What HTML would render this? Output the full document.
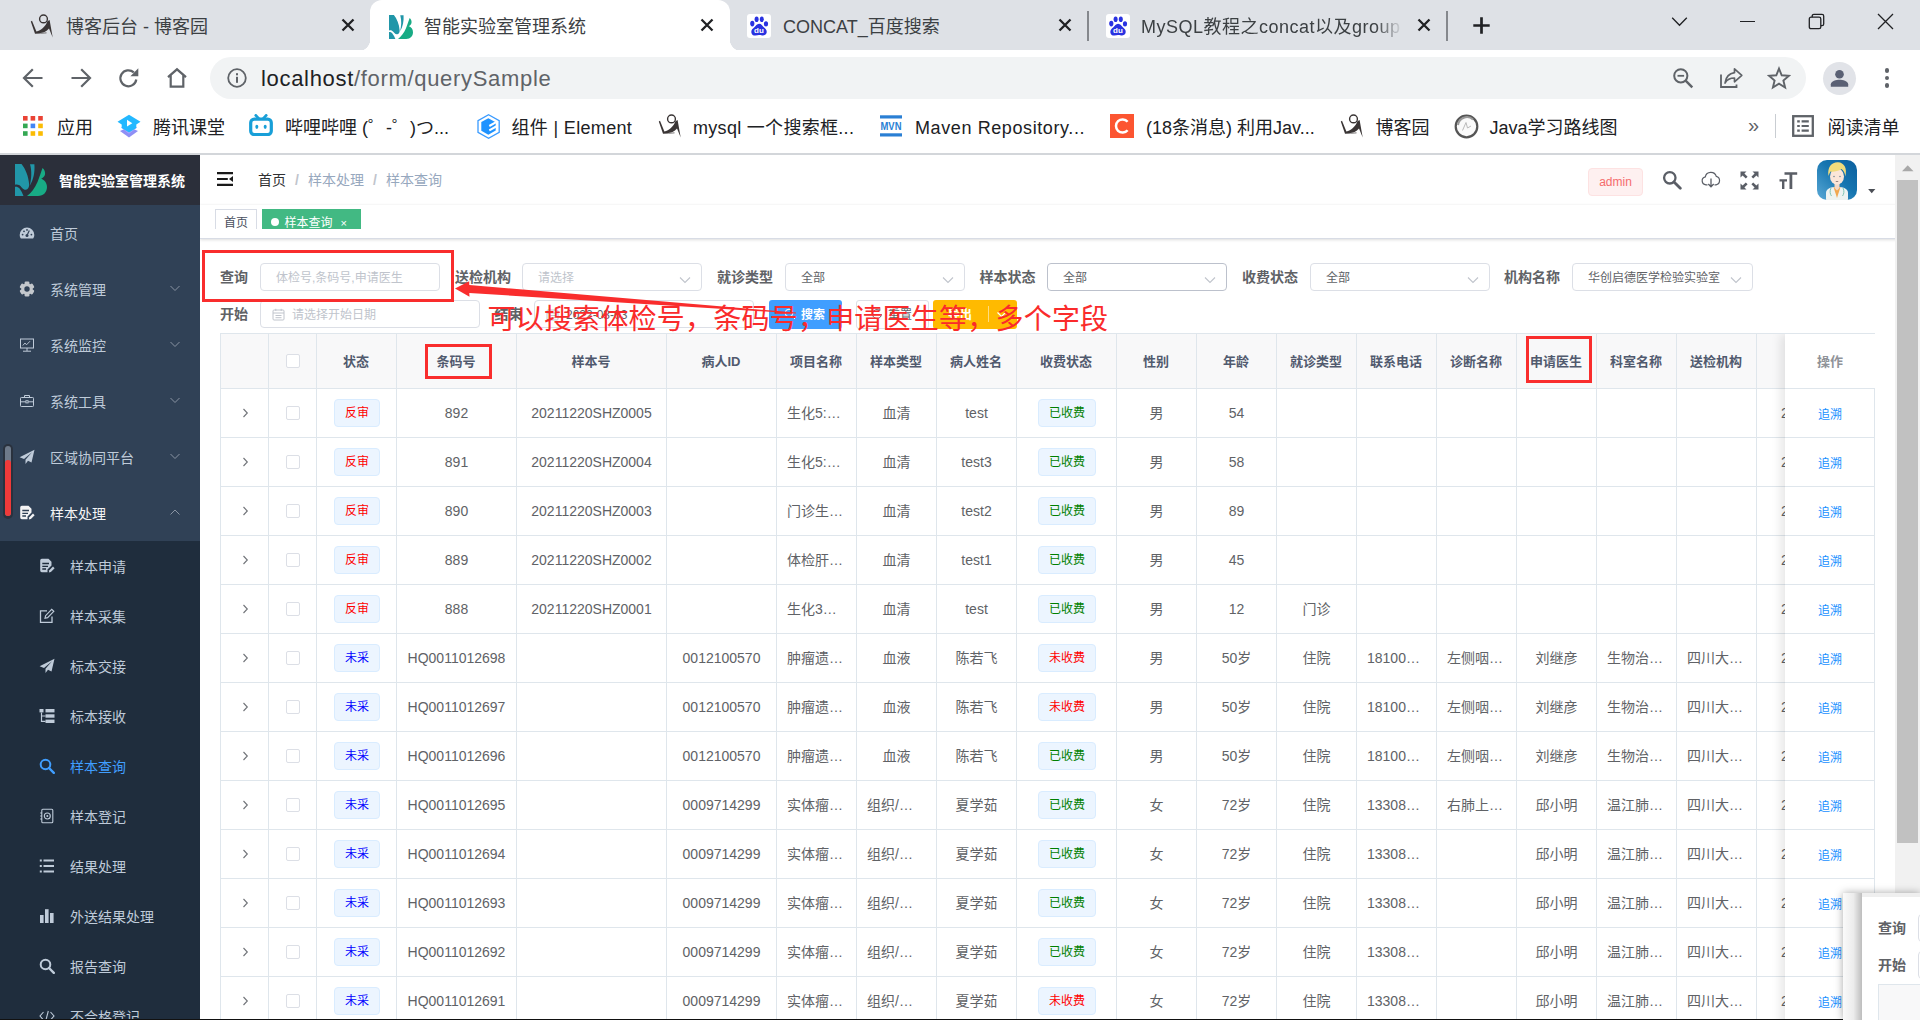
<!DOCTYPE html>
<html lang="zh-CN">
<head>
<meta charset="utf-8">
<title>智能实验室管理系统</title>
<style>
*{box-sizing:border-box;margin:0;padding:0}
html,body{width:1920px;height:1020px;overflow:hidden;background:#fff}
body{position:relative;font-family:"Liberation Sans","Noto Sans CJK SC",sans-serif;color:#606266;font-size:14px}
.abs{position:absolute}
svg{display:block}
/* ---------- browser chrome ---------- */
#tabstrip{position:absolute;left:0;top:0;width:1920px;height:50.500px;background:#dee1e6}
#toolbar{position:absolute;left:0;top:50px;width:1920px;height:53px;background:#fff}
#bmbar{position:absolute;left:0;top:103px;width:1920px;height:49px;background:#fff}
#chromeline{position:absolute;left:0;top:152.500px;width:1920px;height:2.500px;background:#d3d6da;z-index:50}
.tabtxt{position:absolute;top:12px;height:30px;line-height:30px;font-size:18px;color:#3c4043;white-space:nowrap;overflow:hidden}
.tabx{position:absolute;top:17px;width:16px;height:16px}
.tabsep{position:absolute;top:11px;width:1.500px;height:30px;background:#85888d}
#acttab{position:absolute;left:370px;top:0;width:360px;height:50.500px;background:#fff;border-radius:12px 12px 0 0}
#acttab:before,#acttab:after{content:"";position:absolute;bottom:0;width:12px;height:12px}
#acttab:before{left:-12px;background:radial-gradient(circle at 0 0,transparent 12px,#fff 12.5px)}
#acttab:after{right:-12px;background:radial-gradient(circle at 100% 0,transparent 12px,#fff 12.5px)}
#pill{position:absolute;left:210px;top:7px;width:1596px;height:42px;border-radius:21px;background:#f1f3f4}
#url{position:absolute;left:51px;top:0;height:41px;line-height:44px;font-size:22px;letter-spacing:.68px;color:#202124;white-space:nowrap}
#url span{color:#5f6368}
.bm{position:absolute;top:2px;height:47px;line-height:47px;font-size:18px;color:#202124;white-space:nowrap}
.ico{position:absolute}

/* ---------- page ---------- */
#page{position:absolute;left:0;top:154px;width:1920px;height:866px;overflow:hidden;background:#fff}
#side{position:absolute;left:0;top:0;width:200px;height:866px;background:#304156;overflow:hidden}
#sidelogo{position:absolute;left:0;top:0;width:200px;height:51px;background:#2b2f3a}
#sidelogo .t{position:absolute;left:59px;top:0;line-height:54.500px;font-size:14px;font-weight:bold;color:#fff;white-space:nowrap;letter-spacing:0}
.mi{position:absolute;left:0;width:200px;height:56px;line-height:59px;font-size:14px;color:#bfcbd9;white-space:nowrap}
.mi .tx{position:absolute;left:50px;top:0}
.mi svg{position:absolute;left:19px;top:20px}
.mi .chev{left:169px;top:22px}
#submenu{position:absolute;left:0;top:387px;width:200px;height:480px;background:#1f2d3d}
.smi{position:absolute;left:0;width:200px;height:50px;line-height:53px;font-size:14px;color:#bfcbd9;white-space:nowrap}
.smi .tx{position:absolute;left:70px;top:0}
.smi svg{position:absolute;left:39px;top:17px}

#main{position:absolute;left:200px;top:0;width:1697px;height:866px;background:#fff;overflow:hidden}
#navbar{position:absolute;left:0;top:0;width:1697px;height:51px;background:#fff;box-shadow:0 1px 4px rgba(0,21,41,.08)}
.bc{position:absolute;top:0;line-height:53px;font-size:14px;white-space:nowrap}
#tags{position:absolute;left:0;top:51px;width:1697px;height:34px;background:#fff;border-bottom:1px solid #d8dce5;box-shadow:0 1px 3px 0 rgba(0,0,0,.12),0 0 3px 0 rgba(0,0,0,.04)}
#tagclip{position:absolute;left:0;top:0;width:1697px;height:24px;overflow:hidden}
.tag{position:absolute;top:4px;height:26px;line-height:26px;border:1px solid #d8dce5;color:#495060;background:#fff;font-size:12px;white-space:nowrap}
.lab{position:absolute;height:28px;line-height:29px;font-size:14px;font-weight:bold;color:#606266;white-space:nowrap}
.inp{position:absolute;height:28px;border:1px solid #dcdfe6;border-radius:4px;background:#fff;font-size:12px;line-height:29px;color:#606266;white-space:nowrap;overflow:hidden}
.inp .ph{color:#c0c4cc}
.inp .arr{position:absolute;right:10.500px;top:9.500px}
.btn{position:absolute;top:146px;height:28.500px;border-radius:3px;font-size:12px;line-height:30px;color:#fff;white-space:nowrap}

#tbl{position:absolute;left:20px;top:179px;width:1655px;height:700px;border-top:1px solid #dfe6ec;border-left:1px solid #dfe6ec;overflow:hidden;color:#606266}
#tbl .hd{position:absolute;left:0;top:0;width:1653px;height:55px;background:#f8f8f9;border-bottom:1px solid #dfe6ec}
#tbl .vl{position:absolute;top:0;width:1px;height:700px;background:#dfe6ec}
#tbl .hl{position:absolute;left:0;width:1653px;height:1px;background:#dfe6ec}
.th{position:absolute;top:0;height:54px;line-height:55px;text-align:center;font-size:13px;font-weight:bold;color:#515a6e;white-space:nowrap}
.td{position:absolute;height:48px;line-height:48px;text-align:center;font-size:14px;white-space:nowrap;overflow:hidden}
.td.l{text-align:left;padding-left:10px}
.cb{position:absolute;left:65px;width:14px;height:14px;border:1px solid #dcdfe6;border-radius:2px;background:#fff}
.tg{position:absolute;height:28px;line-height:27px;border:1px solid #d9ecff;border-radius:4px;background:#ecf5ff;font-size:12px;text-align:center;white-space:nowrap}
#fix{position:absolute;left:1564px;top:0;width:90px;height:700px;background:#fff;box-shadow:-4px 0 10px rgba(0,0,0,.1);border-right:1px solid #dfe6ec}
#fix .hd2{position:absolute;left:0;top:0;width:90px;height:55px;background:#fff;border-bottom:1px solid #dfe6ec;line-height:55px;text-align:center;font-size:13px;font-weight:bold;color:#909399}
#fix .lk{position:absolute;left:0;width:90px;height:48px;line-height:53px;text-align:center;font-size:12px;color:#1890ff}
#fix .hl2{position:absolute;left:0;width:90px;height:1px;background:#dfe6ec}
</style>
</head>
<body>
<!-- ================= BROWSER CHROME ================= -->
<div id="tabstrip">
  <div id="acttab"></div>
  <svg class="ico" style="left:30px;top:14px" width="24" height="24" viewBox="0 0 24 24"><circle cx="13.500" cy="4.900" r="3.900" fill="none" stroke="#3a3535" stroke-width="1.400"/><path d="M0.800 7.400 L2 6.800 L6.400 17.400 C11 16.500 15.500 12.500 17.400 7.200 L19.600 6 L22.700 23.500 L19 14.500 C16.500 17.500 13 19 9 19.200 L16.500 18.600 L16.500 19.300 L5 19.800 Z" fill="#3a3535"/></svg><div class="tabtxt" style="left:66px;width:270px">博客后台 - 博客园</div><svg class="tabx" style="left:340px" viewBox="0 0 16 16"><path d="M2.500 2.500 L13.500 13.500 M13.500 2.500 L2.500 13.500" stroke="#202124" stroke-width="2.300" fill="none"/></svg><svg class="ico" style="left:389px;top:14.5px" width="24" height="24" viewBox="0 0 32 32"><path d="M0 0 H6.500 C10.500 5 13.500 12 14.200 20.500 C14.300 23 13 25.500 10.800 25.800 C8 26 6.500 22.500 4 21 C2.500 20.200 1 20.300 0 20.800 Z" fill="#2196a8"/><path d="M15 0.300 H19.400 C20 8 18.500 16 14.800 21.500 C16.500 15 17 7 15 0.300 Z" fill="#2196a8"/><path d="M0 22.800 C1.500 22.400 3 22.800 4.500 24.500 C6.500 27 7.500 29.500 8.500 32 H0 Z" fill="#2196a8"/><path d="M27.500 4 C29.500 5.500 30.500 8 30 10.500 C29.500 12.500 28 14 26.200 14.800 C29.500 16 32 19 32 23 C32 28 28.500 32 23 32 H12 C16 29 20 24 22.500 18 C24.500 13 26 8 27.500 4 Z" fill="#18ab85"/></svg><div class="tabtxt" style="left:424px;width:270px">智能实验室管理系统</div><svg class="tabx" style="left:699px" viewBox="0 0 16 16"><path d="M2.500 2.500 L13.500 13.500 M13.500 2.500 L2.500 13.500" stroke="#202124" stroke-width="2.300" fill="none"/></svg><svg class="ico" style="left:747px;top:14px" width="24" height="24" viewBox="0 0 24 24"><rect width="24" height="24" rx="3" fill="#fff"/><g fill="#2932e1"><ellipse cx="5.3" cy="9.6" rx="2.1" ry="2.8"/><ellipse cx="9.6" cy="5.2" rx="2" ry="2.8"/><ellipse cx="14.8" cy="5.3" rx="2" ry="2.8"/><ellipse cx="19" cy="9.9" rx="2.1" ry="2.7"/><path d="M12.1 9.8c2.4 0 3.3 2.3 5 3.8 1.9 1.6 3 2.7 2.5 5.2-.5 2.3-2.700 2.800-4.4 2.600-1.400-.2-2.200-.4-3.200-.4s-2.100.3-3.500.5c-1.800.2-3.700-.6-4.100-2.800-.4-2.500 1-3.700 2.700-5.100 1.800-1.500 2.600-3.800 5-3.800z"/></g><text x="12" y="19.300" font-family="Liberation Sans,sans-serif" font-size="8" font-weight="bold" fill="#fff" text-anchor="middle">du</text></svg><div class="tabtxt" style="left:783px;width:270px">CONCAT_百度搜索</div><svg class="tabx" style="left:1057px" viewBox="0 0 16 16"><path d="M2.500 2.500 L13.500 13.500 M13.500 2.500 L2.500 13.500" stroke="#202124" stroke-width="2.300" fill="none"/></svg><div class="tabsep" style="left:1087px"></div><svg class="ico" style="left:1106px;top:14px" width="24" height="24" viewBox="0 0 24 24"><rect width="24" height="24" rx="3" fill="#fff"/><g fill="#2932e1"><ellipse cx="5.3" cy="9.6" rx="2.1" ry="2.8"/><ellipse cx="9.6" cy="5.2" rx="2" ry="2.8"/><ellipse cx="14.8" cy="5.3" rx="2" ry="2.8"/><ellipse cx="19" cy="9.9" rx="2.1" ry="2.7"/><path d="M12.1 9.8c2.4 0 3.3 2.3 5 3.8 1.9 1.6 3 2.7 2.5 5.2-.5 2.3-2.700 2.800-4.4 2.600-1.400-.2-2.200-.4-3.200-.4s-2.100.3-3.500.5c-1.800.2-3.700-.6-4.100-2.800-.4-2.500 1-3.700 2.700-5.100 1.800-1.500 2.600-3.800 5-3.800z"/></g><text x="12" y="19.300" font-family="Liberation Sans,sans-serif" font-size="8" font-weight="bold" fill="#fff" text-anchor="middle">du</text></svg><div class="tabtxt" style="left:1141px;width:262px;-webkit-mask-image:linear-gradient(90deg,#000 235px,transparent 262px);mask-image:linear-gradient(90deg,#000 235px,transparent 262px);letter-spacing:.5px">MySQL教程之concat以及group</div><svg class="tabx" style="left:1416px" viewBox="0 0 16 16"><path d="M2.500 2.500 L13.500 13.500 M13.500 2.500 L2.500 13.500" stroke="#202124" stroke-width="2.300" fill="none"/></svg><div class="tabsep" style="left:1446px"></div><svg class="ico" style="left:1472.500px;top:17px" width="17" height="17" viewBox="0 0 17 17"><path d="M8.500 0.300V16.700M0.300 8.500H16.700" stroke="#202124" stroke-width="2.700"/></svg><svg class="ico" style="left:1670px;top:12px" width="20" height="20" viewBox="0 0 20 20"><path d="M2.200 5.700 L9.500 13.300 L16.800 5.700" stroke="#202124" stroke-width="1.300" fill="none"/></svg><div class="abs" style="left:1740px;top:20.800px;width:15px;height:1.200px;background:#202124"></div><svg class="ico" style="left:1808px;top:13px" width="17" height="17" viewBox="0 0 17 17"><path d="M4.200 4.200 V3 a1.700 1.700 0 0 1 1.700 -1.700 H14 a1.700 1.700 0 0 1 1.700 1.700 V11 a1.700 1.700 0 0 1 -1.700 1.700 H12.800" stroke="#202124" stroke-width="1.300" fill="none"/><rect x="1.300" y="4.200" width="11.500" height="11.500" rx="1.700" stroke="#202124" stroke-width="1.300" fill="none"/></svg><svg class="ico" style="left:1877px;top:13px" width="17" height="17" viewBox="0 0 17 17"><path d="M1 1 L16 16 M16 1 L1 16" stroke="#202124" stroke-width="1.300" fill="none"/></svg>
</div>
<div id="toolbar">
  <div id="pill"><div id="url">localhost<span>/form/querySample</span></div></div>
  <svg class="ico" style="left:22px;top:17px" width="22" height="22" viewBox="0 0 22 22"><path d="M20.500 11H3M10.800 2.200 L2 11 L10.800 19.800" stroke="#5f6368" stroke-width="2.200" fill="none"/></svg><svg class="ico" style="left:70px;top:17px" width="22" height="22" viewBox="0 0 22 22"><path d="M1.500 11H19M11.200 2.200 L20 11 L11.200 19.800" stroke="#5f6368" stroke-width="2.200" fill="none"/></svg><svg class="ico" style="left:118px;top:17px" width="22" height="22" viewBox="0 0 22 22"><path d="M18.300 12.500 A8 8 0 1 1 15.800 5.400" stroke="#5f6368" stroke-width="2.200" fill="none"/><path d="M20.300 1.300 V9.200 H12.400 Z" fill="#5f6368"/></svg><svg class="ico" style="left:166px;top:17px" width="22" height="22" viewBox="0 0 22 22"><path d="M2 10.200 L11 2.300 L20 10.200 M4.700 8.600 V19.600 H17.300 V8.600" stroke="#5f6368" stroke-width="2.200" fill="none" stroke-linejoin="miter"/></svg><svg class="ico" style="left:226px;top:17px" width="22" height="22" viewBox="0 0 22 22"><circle cx="11" cy="11" r="8.800" stroke="#5f6368" stroke-width="1.800" fill="none"/><rect x="10" y="9.800" width="2" height="6" fill="#5f6368"/><rect x="10" y="6.200" width="2" height="2.100" fill="#5f6368"/></svg><svg class="ico" style="left:1672px;top:17px" width="22" height="22" viewBox="0 0 22 22"><circle cx="8.800" cy="8.800" r="6.600" stroke="#5f6368" stroke-width="2" fill="none"/><path d="M13.600 13.600 L20.300 20.300" stroke="#5f6368" stroke-width="2.400"/><path d="M5.500 8.800H12.100" stroke="#5f6368" stroke-width="1.800"/></svg><svg class="ico" style="left:1719px;top:16px" width="25" height="24" viewBox="0 0 25 24"><path d="M2 8.500 V21 H17.500 V18.500" stroke="#5f6368" stroke-width="1.800" fill="none"/><path d="M15.500 2.800 L22.800 9.300 L15.500 15.800 V12 C11 12 8 13.500 6 17 C6.800 11.500 9.800 7.500 15.500 6.700 Z" stroke="#5f6368" stroke-width="1.700" fill="none" stroke-linejoin="round"/></svg><svg class="ico" style="left:1767px;top:16px" width="24" height="24" viewBox="0 0 24 24"><path d="M12 2.600 L14.700 9.300 L21.900 9.800 L16.400 14.500 L18.100 21.500 L12 17.700 L5.900 21.500 L7.600 14.500 L2.100 9.800 L9.300 9.300 Z" stroke="#5f6368" stroke-width="1.900" fill="none" stroke-linejoin="miter"/></svg><div class="abs" style="left:1823px;top:12px;width:33px;height:33px;border-radius:50%;background:#e1e3e8"></div><svg class="ico" style="left:1829px;top:18px" width="21" height="21" viewBox="0 0 21 21"><circle cx="10.500" cy="6.300" r="4.300" fill="#5a6074"/><path d="M1.800 18.800 V16.300 C1.800 13 7.500 11.700 10.500 11.700 S19.200 13 19.200 16.300 V18.800 Z" fill="#5a6074"/></svg><div class="abs" style="left:1884.800px;top:18.4px;width:4.400px;height:4.400px;border-radius:50%;background:#5f6368"></div><div class="abs" style="left:1884.800px;top:25.9px;width:4.400px;height:4.400px;border-radius:50%;background:#5f6368"></div><div class="abs" style="left:1884.800px;top:33.4px;width:4.400px;height:4.400px;border-radius:50%;background:#5f6368"></div>
</div>
<div id="bmbar">
  <svg class="ico" style="left:23px;top:12.500px" width="20" height="20" viewBox="0 0 20 20"><rect x="0.0" y="0.0" width="4.600" height="4.600" fill="#ea4335"/><rect x="7.6" y="0.0" width="4.600" height="4.600" fill="#ea4335"/><rect x="15.2" y="0.0" width="4.600" height="4.600" fill="#ea4335"/><rect x="0.0" y="7.6" width="4.600" height="4.600" fill="#34a853"/><rect x="7.6" y="7.6" width="4.600" height="4.600" fill="#4285f4"/><rect x="15.2" y="7.6" width="4.600" height="4.600" fill="#fbbc04"/><rect x="0.0" y="15.2" width="4.600" height="4.600" fill="#34a853"/><rect x="7.6" y="15.2" width="4.600" height="4.600" fill="#fbbc04"/><rect x="15.2" y="15.2" width="4.600" height="4.600" fill="#fbbc04"/></svg><div class="bm" style="left:57px">应用</div><svg class="ico" style="left:117px;top:10.500px" width="24" height="24" viewBox="0 0 24 24"><path d="M12 13 L21 17 L12 23.500 L3 17 Z" fill="#8f8ff5"/><path d="M12 9 L20 13.500 L12 19.800 L4 13.500 Z" fill="#b0a6ff"/><path d="M12 0.800 L23.500 7.800 L19.300 10.500 V14 L12 18.500 L4.700 14 V10.500 L0.500 7.800 Z" fill="#23b8ff"/><path d="M10 5.800 L15.300 9.200 L10 12.600 Z" fill="#fff"/></svg><div class="bm" style="left:153px">腾讯课堂</div><svg class="ico" style="left:249px;top:11px" width="24" height="22" viewBox="0 0 24 22"><path d="M6.800 1.400 L9.800 4.600 M17.200 1.400 L14.200 4.600" stroke="#189fd8" stroke-width="2.800" stroke-linecap="round"/><rect x="1.700" y="5.200" width="20.600" height="15.400" rx="3.600" fill="none" stroke="#189fd8" stroke-width="3.200"/><ellipse cx="7.800" cy="12.800" rx="1.500" ry="2.100" fill="#189fd8"/><ellipse cx="16.200" cy="12.800" rx="1.500" ry="2.100" fill="#189fd8"/></svg><div class="bm" style="left:285px">哔哩哔哩 (゜-゜)つ...</div><svg class="ico" style="left:476.500px;top:10.500px" width="23" height="25" viewBox="0 0 23 25"><path d="M11.600 0.800 L22.200 6.700 V18.300 L11.600 24.200 L1 18.300 V6.700 Z" fill="#fff" stroke="#3a9bff" stroke-width="1.300"/><path d="M11.300 4.200 L18.700 8.300 V16.600 L11.300 20.700 L4.300 16.700 V8 Z" fill="#1f93ff"/><path d="M12.300 12 L20 7.700 M12.300 16.300 L20 12" stroke="#fff" stroke-width="2.100"/></svg><div class="bm" style="left:511.500px;letter-spacing:.33px">组件 | Element</div><svg class="ico" style="left:658px;top:11px" width="24" height="24" viewBox="0 0 24 24"><circle cx="13.500" cy="4.900" r="3.900" fill="none" stroke="#3a3535" stroke-width="1.400"/><path d="M0.800 7.400 L2 6.800 L6.400 17.400 C11 16.500 15.500 12.500 17.400 7.200 L19.600 6 L22.700 23.500 L19 14.500 C16.500 17.500 13 19 9 19.200 L16.500 18.600 L16.500 19.300 L5 19.800 Z" fill="#3a3535"/></svg><div class="bm" style="left:693px;letter-spacing:.3px">mysql 一个搜索框...</div><svg class="ico" style="left:880px;top:12px" width="22" height="22" viewBox="0 0 22 22"><rect x="0" y="0.300" width="22" height="3.200" fill="#2a7fd4"/><rect x="0" y="18.300" width="22" height="3.200" fill="#2a7fd4"/><text x="11" y="15.200" font-family="Liberation Sans,sans-serif" font-weight="bold" font-size="10.500" fill="#2a7fd4" text-anchor="middle" textLength="21" lengthAdjust="spacingAndGlyphs">MVN</text></svg><div class="bm" style="left:915px;letter-spacing:.6px">Maven Repository...</div><svg class="ico" style="left:1110px;top:11px" width="24" height="24" viewBox="0 0 24 24"><rect width="24" height="24" fill="#fc5531"/><path d="M17.600 7.700 A6.600 6.600 0 1 0 17.600 16.300" stroke="#fff" stroke-width="2.500" fill="none"/></svg><div class="bm" style="left:1146px">(18条消息) 利用Jav...</div><svg class="ico" style="left:1340px;top:11px" width="24" height="24" viewBox="0 0 24 24"><circle cx="13.500" cy="4.900" r="3.900" fill="none" stroke="#3a3535" stroke-width="1.400"/><path d="M0.800 7.400 L2 6.800 L6.400 17.400 C11 16.500 15.500 12.500 17.400 7.200 L19.600 6 L22.700 23.500 L19 14.500 C16.500 17.500 13 19 9 19.200 L16.500 18.600 L16.500 19.300 L5 19.800 Z" fill="#3a3535"/></svg><div class="bm" style="left:1375.500px">博客园</div><svg class="ico" style="left:1453.500px;top:10.500px" width="25" height="25" viewBox="0 0 25 25"><circle cx="12.500" cy="12.500" r="10.800" fill="#fafafa" stroke="#555" stroke-width="2.200"/><path d="M4 11 A9 9 0 0 1 19 5.500" stroke="#999" stroke-width="2" fill="none"/><path d="M8.500 16.500 L12 8.500 L13.500 14 L17 12" stroke="#bbb" stroke-width="1" fill="none"/></svg><div class="bm" style="left:1489.500px">Java学习路线图</div><div class="bm" style="left:1748px;top:-1px;font-size:20px;color:#5f6368">»</div><div class="abs" style="left:1775px;top:11px;width:1px;height:24px;background:#c9cdd2"></div><svg class="ico" style="left:1792px;top:12px" width="22" height="22" viewBox="0 0 22 22"><rect x="1.200" y="1.200" width="19.600" height="19.600" fill="none" stroke="#5f6368" stroke-width="2.300"/><path d="M5.200 6.300h2.600M9.600 6.300h7.200M5.200 11h2.600M9.600 11h7.200M5.200 15.700h2.600M9.600 15.700h7.200" stroke="#5f6368" stroke-width="2.200"/></svg><div class="bm" style="left:1827.500px">阅读清单</div>
</div>
<div id="chromeline"></div>
<!-- ================= PAGE ================= -->
<div id="page">
<div id="side"><div id="sidelogo"><svg class="ico" style="left:15px;top:10px" width="32" height="32" viewBox="0 0 32 32"><path d="M0 0 H6.500 C10.500 5 13.500 12 14.200 20.500 C14.300 23 13 25.500 10.800 25.800 C8 26 6.500 22.500 4 21 C2.500 20.200 1 20.300 0 20.800 Z" fill="#2196a8"/><path d="M15 0.300 H19.400 C20 8 18.500 16 14.800 21.500 C16.500 15 17 7 15 0.300 Z" fill="#2196a8"/><path d="M0 22.800 C1.500 22.400 3 22.800 4.500 24.500 C6.500 27 7.500 29.500 8.500 32 H0 Z" fill="#2196a8"/><path d="M27.500 4 C29.500 5.500 30.500 8 30 10.500 C29.500 12.500 28 14 26.200 14.800 C29.500 16 32 19 32 23 C32 28 28.500 32 23 32 H12 C16 29 20 24 22.500 18 C24.500 13 26 8 27.500 4 Z" fill="#18ab85"/></svg><div class="t">智能实验室管理系统</div></div><div class="mi" style="top:51px"><svg width="16" height="16" viewBox="0 0 16 16"><path d="M8 2.500 A7.300 7.300 0 0 0 0.700 9.800 C0.700 11.400 1.200 12.700 1.900 13.600 H14.100 C14.800 12.700 15.300 11.400 15.300 9.800 A7.300 7.300 0 0 0 8 2.500 Z" fill="#bfcbd9"/><circle cx="8" cy="10.500" r="1.500" fill="#304156"/><path d="M8 10.500 L10.300 5.500" stroke="#304156" stroke-width="1.200"/><circle cx="3.600" cy="9.600" r=".9" fill="#304156"/><circle cx="5" cy="6.300" r=".9" fill="#304156"/><circle cx="8" cy="4.900" r=".9" fill="#304156"/><circle cx="12.400" cy="9.600" r=".9" fill="#304156"/></svg><span class="tx">首页</span></div><div class="mi" style="top:107px"><svg width="16" height="16" viewBox="-8 -8 16 16"><g fill="#c3c7cc"><circle r="5.700"/><rect x="-2.400" y="-7.400" width="4.800" height="14.800" rx="1.200"/><rect x="-2.400" y="-7.400" width="4.800" height="14.800" rx="1.200" transform="rotate(60)"/><rect x="-2.400" y="-7.400" width="4.800" height="14.800" rx="1.200" transform="rotate(120)"/></g><circle r="2.700" fill="#304156"/></svg><span class="tx">系统管理</span><svg class="chev" width="12" height="12" viewBox="0 0 12 12"><path d="M1.500 3 L6 7.500 L10.500 3" stroke="#8a94a3" stroke-width="1" fill="none"/></svg></div><div class="mi" style="top:163px"><svg width="16" height="16" viewBox="0 0 16 16"><rect x="1.500" y="2" width="13" height="9" fill="none" stroke="#bfcbd9" stroke-width="1"/><path d="M8 11 V14 M4 14.200 H12" stroke="#bfcbd9" stroke-width="1"/><path d="M3.800 8.500 L6 6 L7.500 7.800 L11 4.200" stroke="#bfcbd9" stroke-width=".9" fill="none"/></svg><span class="tx">系统监控</span><svg class="chev" width="12" height="12" viewBox="0 0 12 12"><path d="M1.500 3 L6 7.500 L10.500 3" stroke="#8a94a3" stroke-width="1" fill="none"/></svg></div><div class="mi" style="top:219px"><svg width="16" height="16" viewBox="0 0 16 16"><rect x="1.500" y="4.500" width="13" height="9" rx=".8" fill="none" stroke="#bfcbd9" stroke-width="1"/><path d="M5.500 4.300 V2.500 H10.500 V4.300 M1.500 8.800 H6.800 M9.200 8.800 H14.500" stroke="#bfcbd9" stroke-width="1" fill="none"/><rect x="6.900" y="7.700" width="2.200" height="2.200" fill="none" stroke="#bfcbd9" stroke-width=".9"/></svg><span class="tx">系统工具</span><svg class="chev" width="12" height="12" viewBox="0 0 12 12"><path d="M1.500 3 L6 7.500 L10.500 3" stroke="#8a94a3" stroke-width="1" fill="none"/></svg></div><div class="mi" style="top:275px"><svg width="16" height="16" viewBox="0 0 16 16"><path d="M15.500 0.800 L0.600 8.200 L5 10 L13 3.300 L6.500 10.800 L6.500 15 L9 11.800 L12.500 13.500 Z" fill="#bfcbd9"/></svg><span class="tx">区域协同平台</span><svg class="chev" width="12" height="12" viewBox="0 0 12 12"><path d="M1.500 3 L6 7.500 L10.500 3" stroke="#8a94a3" stroke-width="1" fill="none"/></svg></div><div class="mi" style="top:331px;color:#f4f4f5"><svg width="16" height="16" viewBox="0 0 16 16"><path d="M2.800 0.800 H9.500 L12.500 3.800 V7.500 L8.500 11.500 V14.200 H2.800 A1.600 1.600 0 0 1 1.200 12.600 V2.400 A1.600 1.600 0 0 1 2.800 0.800 Z" fill="#f4f4f5"/><path d="M3.300 5.500 H10 M3.300 8.300 H9 M3.300 11 H7" stroke="#304156" stroke-width="1.300"/><path d="M9.800 14.400 L10.300 12.300 L14 8.600 L15.600 10.200 L11.900 13.900 Z" fill="#f4f4f5"/></svg><span class="tx">样本处理</span><svg class="chev" width="12" height="12" viewBox="0 0 12 12"><path d="M1.500 7.500 L6 3 L10.500 7.500" stroke="#8a94a3" stroke-width="1" fill="none"/></svg></div><div id="submenu"><div class="smi" style="top:0px;color:#bfcbd9"><svg width="16" height="16" viewBox="0 0 16 16"><path d="M2.800 0.800 H9.500 L12.500 3.800 V7.500 L8.500 11.500 V14.200 H2.800 A1.600 1.600 0 0 1 1.200 12.600 V2.400 A1.600 1.600 0 0 1 2.800 0.800 Z" fill="#bfcbd9"/><path d="M3.300 5.500 H10 M3.300 8.300 H9 M3.300 11 H7" stroke="#1f2d3d" stroke-width="1.300"/><path d="M9.800 14.400 L10.300 12.300 L14 8.600 L15.600 10.200 L11.900 13.900 Z" fill="#bfcbd9"/></svg><span class="tx">样本申请</span></div><div class="smi" style="top:50px;color:#bfcbd9"><svg width="16" height="16" viewBox="0 0 16 16"><path d="M13 8.500 V14.300 H1.500 V2.800 H8" stroke="#bfcbd9" stroke-width="1.300" fill="none"/><path d="M6 10.300 L6.600 7.700 L12.700 1.300 L14.800 3.300 L8.600 9.700 Z" fill="none" stroke="#bfcbd9" stroke-width="1.200"/></svg><span class="tx">样本采集</span></div><div class="smi" style="top:100px;color:#bfcbd9"><svg width="16" height="16" viewBox="0 0 16 16"><path d="M15.500 0.800 L0.600 8.200 L5 10 L13 3.300 L6.500 10.800 L6.500 15 L9 11.800 L12.500 13.500 Z" fill="#bfcbd9"/></svg><span class="tx">标本交接</span></div><div class="smi" style="top:150px;color:#bfcbd9"><svg width="16" height="16" viewBox="0 0 16 16"><rect x="0.500" y="1" width="4" height="3.400" fill="#bfcbd9"/><rect x="6.500" y="1" width="9" height="3.400" fill="#bfcbd9"/><rect x="6.500" y="6.300" width="9" height="3.400" fill="#bfcbd9"/><rect x="6.500" y="11.600" width="9" height="3.400" fill="#bfcbd9"/><path d="M2.500 4.400 V13.300 H6.500 M2.500 8 H6.500" stroke="#bfcbd9" stroke-width="1.200" fill="none"/></svg><span class="tx">标本接收</span></div><div class="smi" style="top:200px;color:#409eff"><svg width="16" height="16" viewBox="0 0 16 16"><circle cx="6.500" cy="6.500" r="4.800" fill="none" stroke="#409eff" stroke-width="2"/><path d="M10 10 L14.800 14.800" stroke="#409eff" stroke-width="2.400" stroke-linecap="round"/></svg><span class="tx">样本查询</span></div><div class="smi" style="top:250px;color:#bfcbd9"><svg width="16" height="16" viewBox="0 0 16 16"><rect x="2.800" y="1.200" width="11" height="13.600" rx="1" fill="none" stroke="#bfcbd9" stroke-width="1.100"/><circle cx="8.300" cy="8" r="3" fill="none" stroke="#bfcbd9" stroke-width="1.100"/><circle cx="8.300" cy="8" r="1" fill="#bfcbd9"/><path d="M1.200 5 H3 M1.200 8 H3 M1.200 11 H3" stroke="#bfcbd9" stroke-width="1.100"/></svg><span class="tx">样本登记</span></div><div class="smi" style="top:300px;color:#bfcbd9"><svg width="16" height="16" viewBox="0 0 16 16"><path d="M4.500 2.500 H15 M4.500 8 H15 M4.500 13.500 H15" stroke="#bfcbd9" stroke-width="2"/><path d="M0.800 2.500 H2.800 M0.800 8 H2.800 M0.800 13.500 H2.800" stroke="#bfcbd9" stroke-width="2"/></svg><span class="tx">结果处理</span></div><div class="smi" style="top:350px;color:#bfcbd9"><svg width="16" height="16" viewBox="0 0 16 16"><rect x="1" y="7" width="3.600" height="8" fill="#bfcbd9"/><rect x="6" y="1.200" width="3.600" height="13.800" fill="#bfcbd9"/><rect x="11" y="5" width="3.600" height="10" fill="#bfcbd9"/></svg><span class="tx">外送结果处理</span></div><div class="smi" style="top:400px;color:#bfcbd9"><svg width="16" height="16" viewBox="0 0 16 16"><circle cx="6.500" cy="6.500" r="4.800" fill="none" stroke="#bfcbd9" stroke-width="2"/><path d="M10 10 L14.800 14.800" stroke="#bfcbd9" stroke-width="2.400" stroke-linecap="round"/></svg><span class="tx">报告查询</span></div><div class="smi" style="top:450px;color:#bfcbd9"><svg width="16" height="16" viewBox="0 0 16 16"><path d="M4.500 4 L1 8 L4.500 12 M11.500 4 L15 8 L11.500 12 M9.300 3 L6.700 13" stroke="#bfcbd9" stroke-width="1.100" fill="none"/></svg><span class="tx">不合格登记</span></div></div><div class="abs" style="left:3px;top:290px;width:10px;height:75px;border-radius:5px;background:#2a323e"></div><div class="abs" style="left:5px;top:292px;width:6px;height:70px;border-radius:3px;background:#6e7a8a"></div><div class="abs" style="left:5px;top:306px;width:6px;height:56px;border-radius:3px;background:#f03a3a"></div></div>
<div id="main"><div id="navbar"><svg class="ico" style="left:17px;top:18px" width="17" height="14" viewBox="0 0 17 14"><path d="M0 1.100 H16 M0 7 H10.800 M0 12.900 H16" stroke="#1a1a1a" stroke-width="2.200"/><path d="M16 4 V10 L12 7 Z" fill="#1a1a1a"/></svg><div class="bc" style="left:58px;color:#303133">首页</div><div class="bc" style="left:95px;color:#c0c4cc;font-weight:bold">/</div><div class="bc" style="left:108px;color:#97a8be">样本处理</div><div class="bc" style="left:173px;color:#c0c4cc;font-weight:bold">/</div><div class="bc" style="left:186px;color:#97a8be">样本查询</div><div class="abs" style="left:1388px;top:14px;width:55px;height:28px;border:1px solid #fde2e2;border-radius:4px;background:#fef0f0;color:#f56c6c;font-size:12px;line-height:27px;text-align:center">admin</div><svg class="ico" style="left:1462px;top:16px" width="20" height="20" viewBox="0 0 20 20"><circle cx="7.800" cy="7.800" r="5.700" fill="none" stroke="#5a5e66" stroke-width="2.300"/><path d="M12 12 L18.300 18.300" stroke="#5a5e66" stroke-width="2.800" stroke-linecap="round"/></svg><svg class="ico" style="left:1501px;top:17px" width="20" height="18" viewBox="0 0 20 18"><path d="M6.500 13.800 H5 A4 4 0 0 1 4.300 5.900 A5.700 5.700 0 0 1 15.300 5.400 A4.300 4.300 0 0 1 15 13.800 H13.500" fill="none" stroke="#5a5e66" stroke-width="1.200"/><path d="M10 7.500 V15.500 M7.300 13 L10 15.800 L12.700 13" fill="none" stroke="#5a5e66" stroke-width="1.300"/></svg><svg class="ico" style="left:1539.500px;top:17px" width="19" height="19" viewBox="0 0 19 19"><g fill="#5a5e66"><path d="M0.500 0.500 H6.500 L4.400 2.600 L7.600 5.800 L5.800 7.600 L2.600 4.400 L0.500 6.500 Z"/><path d="M18.500 0.500 V6.500 L16.400 4.400 L13.200 7.600 L11.400 5.800 L14.600 2.600 L12.500 0.500 Z"/><path d="M0.500 18.500 V12.500 L2.600 14.600 L5.800 11.400 L7.600 13.200 L4.400 16.400 L6.500 18.500 Z"/><path d="M18.500 18.500 H12.500 L14.600 16.400 L11.400 13.200 L13.200 11.400 L16.400 14.600 L18.500 12.500 Z"/></g></svg><svg class="ico" style="left:1578.500px;top:17px" width="19" height="19" viewBox="0 0 19 19"><path d="M5.500 1.200 H18.200 V3.800 H13.300 V18 H10.500 V3.800 H5.500 Z" fill="#5a5e66"/><path d="M0.500 8.200 H8 V10.500 H5.400 V18 H3 V10.500 H0.500 Z" fill="#5a5e66"/></svg><svg class="ico" style="left:1617px;top:6px" width="40" height="40" viewBox="0 0 40 40"><defs><linearGradient id="avg" x1="0" y1="1" x2="1" y2="0"><stop offset="0" stop-color="#5aa9d6"/><stop offset=".55" stop-color="#1675b0"/><stop offset="1" stop-color="#0b5f9e"/></linearGradient><clipPath id="avc"><rect width="40" height="40" rx="10"/></clipPath></defs><g clip-path="url(#avc)"><rect width="40" height="40" fill="url(#avg)"/><path d="M9 40 V33 C9 29 13 27.500 17 27 H23 C27 27.500 31 29 31 33 V40 Z" fill="#eef3f1"/><path d="M16.500 27 L20 38 L23.500 27 Z" fill="#f2a851"/><path d="M17.500 22 H22.500 V28 L20 30.500 L17.500 28 Z" fill="#f3d9c8"/><ellipse cx="20" cy="16.500" rx="7" ry="8.300" fill="#fbe6d8"/><path d="M11.500 16 C10 7 15 2 21 2.300 C27 2.600 30.500 8 28.300 16.500 C28 13 26.500 10.500 24.500 9 C21 11.500 16 12 13.500 11.500 C12.500 13 12 14.500 11.500 16 Z" fill="#f1dc7c"/><circle cx="17" cy="16.500" r=".8" fill="#7a8b96"/><circle cx="23" cy="16.500" r=".8" fill="#7a8b96"/><path d="M18.300 21 Q20 22.400 21.700 21 Z" fill="#5b4a4a"/><path d="M14 28 C12.500 31 13 34 14.500 36 M26 28 C27.500 31 27 34 25.500 36" stroke="#7fc4b4" stroke-width="1" fill="none"/></g></svg><svg class="ico" style="left:1668px;top:35px" width="7.500" height="4.500" viewBox="0 0 8 5"><path d="M0 0 H8 L4 4.600 Z" fill="#4a4e55"/></svg></div><div id="tags"><div id="tagclip"><div class="tag" style="left:15px;width:42px;padding-left:8px">首页</div><div class="tag" style="left:62px;width:99px;background:#42b983;border-color:#42b983;color:#fff"><span class="abs" style="left:8px;top:8px;width:8px;height:8px;border-radius:50%;background:#fff"></span><span class="abs" style="left:21.500px;top:0">样本查询</span><span class="abs" style="left:77.500px;top:0;font-size:11px">×</span></div></div></div>
<div class="lab" style="left:20px;top:109px">查询</div><div class="inp" style="left:60px;top:109px;width:180px;padding-left:15px"><span class="ph">体检号,条码号,申请医生</span></div><div class="lab" style="left:255px;top:109px">送检机构</div><div class="inp" style="left:322px;top:109px;width:180px;padding-left:15px"><span class="ph">请选择</span><svg class="arr" width="12" height="12" viewBox="0 0 12 12"><path d="M1 3.500 L6 8.500 L11 3.500" stroke="#c0c4cc" stroke-width="1.100" fill="none"/></svg></div><div class="lab" style="left:517px;top:109px">就诊类型</div><div class="inp" style="left:585px;top:109px;width:180px;padding-left:15px"><span class="">全部</span><svg class="arr" width="12" height="12" viewBox="0 0 12 12"><path d="M1 3.500 L6 8.500 L11 3.500" stroke="#c0c4cc" stroke-width="1.100" fill="none"/></svg></div><div class="lab" style="left:779.5px;top:109px">样本状态</div><div class="inp" style="left:847px;top:109px;width:180px;padding-left:15px;border-color:#bcc1cc"><span class="">全部</span><svg class="arr" width="12" height="12" viewBox="0 0 12 12"><path d="M1 3.500 L6 8.500 L11 3.500" stroke="#c0c4cc" stroke-width="1.100" fill="none"/></svg></div><div class="lab" style="left:1042px;top:109px">收费状态</div><div class="inp" style="left:1110px;top:109px;width:180px;padding-left:15px"><span class="">全部</span><svg class="arr" width="12" height="12" viewBox="0 0 12 12"><path d="M1 3.500 L6 8.500 L11 3.500" stroke="#c0c4cc" stroke-width="1.100" fill="none"/></svg></div><div class="lab" style="left:1304px;top:109px">机构名称</div><div class="inp" style="left:1372px;top:109px;width:181px;padding-left:15px"><span class="">华创启德医学检验实验室</span><svg class="arr" width="12" height="12" viewBox="0 0 12 12"><path d="M1 3.500 L6 8.500 L11 3.500" stroke="#c0c4cc" stroke-width="1.100" fill="none"/></svg></div><div class="lab" style="left:20px;top:146px">开始</div><div class="inp" style="left:60px;top:146px;width:220px;padding-left:31px"><svg class="abs" style="left:11px;top:7px" width="13" height="13" viewBox="0 0 13 13"><rect x="1" y="2" width="11" height="10" rx="1" fill="none" stroke="#c0c4cc" stroke-width="1"/><path d="M1 5 H12 M3.800 0.800 V3 M9.200 0.800 V3 M3.500 7.500 H9.500 M3.500 9.700 H9.500" stroke="#c0c4cc" stroke-width="1"/></svg><span class="ph">请选择开始日期</span></div><div class="lab" style="left:294.5px;top:146px">结束</div><div class="inp" style="left:334px;top:146px;width:220px;padding-left:31px"><svg class="abs" style="left:11px;top:7px" width="13" height="13" viewBox="0 0 13 13"><rect x="1" y="2" width="11" height="10" rx="1" fill="none" stroke="#c0c4cc" stroke-width="1"/><path d="M1 5 H12 M3.800 0.800 V3 M9.200 0.800 V3 M3.500 7.500 H9.500 M3.500 9.700 H9.500" stroke="#c0c4cc" stroke-width="1"/></svg><span>2022-03-03</span></div><div class="btn" style="left:569px;width:73px;background:#409eff;padding-left:32px"><svg class="abs" style="left:15px;top:8px" width="12" height="12" viewBox="0 0 12 12"><circle cx="5" cy="5" r="3.800" fill="none" stroke="#fff" stroke-width="1"/><path d="M7.800 7.800 L11 11" stroke="#fff" stroke-width="1"/></svg><b>搜索</b></div><div class="btn" style="left:656px;width:73px;background:#fff;border:1px solid #dcdfe6;color:#606266;padding-left:31px;line-height:28px"><svg class="abs" style="left:14px;top:7px" width="12" height="12" viewBox="0 0 12 12"><path d="M10.500 6 A4.500 4.500 0 1 1 8.500 2.300 M8.800 0.500 V2.800 H6.500" fill="none" stroke="#606266" stroke-width="1"/></svg>重置</div><div class="btn" style="left:733px;width:84px;background:#ffba00;padding-left:15px"><b>导出</b><span class="abs" style="left:55px;top:6px;width:1px;height:16px;background:rgba(255,255,255,.5)"></span><svg class="abs" style="left:63px;top:9px" width="11" height="11" viewBox="0 0 11 11"><path d="M1.500 3.500 L5.500 7.500 L9.500 3.500" stroke="#fff" stroke-width="1.100" fill="none"/></svg></div>
<div id="tbl"><div class="hd"></div><div class="vl" style="left:47px"></div><div class="vl" style="left:95px"></div><div class="vl" style="left:175px"></div><div class="vl" style="left:295px"></div><div class="vl" style="left:445px"></div><div class="vl" style="left:555px"></div><div class="vl" style="left:635px"></div><div class="vl" style="left:715px"></div><div class="vl" style="left:795px"></div><div class="vl" style="left:895px"></div><div class="vl" style="left:975px"></div><div class="vl" style="left:1055px"></div><div class="vl" style="left:1135px"></div><div class="vl" style="left:1215px"></div><div class="vl" style="left:1295px"></div><div class="vl" style="left:1375px"></div><div class="vl" style="left:1455px"></div><div class="vl" style="left:1535px"></div><div class="th" style="left:95px;width:80px">状态</div><div class="th" style="left:175px;width:120px">条码号</div><div class="th" style="left:295px;width:150px">样本号</div><div class="th" style="left:445px;width:110px">病人ID</div><div class="th" style="left:555px;width:80px">项目名称</div><div class="th" style="left:635px;width:80px">样本类型</div><div class="th" style="left:715px;width:80px">病人姓名</div><div class="th" style="left:795px;width:100px">收费状态</div><div class="th" style="left:895px;width:80px">性别</div><div class="th" style="left:975px;width:80px">年龄</div><div class="th" style="left:1055px;width:80px">就诊类型</div><div class="th" style="left:1135px;width:80px">联系电话</div><div class="th" style="left:1215px;width:80px">诊断名称</div><div class="th" style="left:1295px;width:80px">申请医生</div><div class="th" style="left:1375px;width:80px">科室名称</div><div class="th" style="left:1455px;width:80px">送检机构</div><div class="cb" style="top:20px"></div><div class="hl" style="top:103px"></div><svg class="abs" style="left:20px;top:73px" width="8" height="12" viewBox="0 0 8 12"><path d="M2.500 2 L6.300 6 L2.500 10" stroke="#707378" stroke-width="1.100" fill="none"/></svg><div class="cb" style="top:72px"></div><div class="tg" style="left:113px;top:65px;width:46px;color:#f00">反审</div><div class="td" style="left:176px;top:55px;width:119px">892</div><div class="td" style="left:296px;top:55px;width:149px">20211220SHZ0005</div><div class="td l" style="left:556px;top:55px;width:79px">生化5:…</div><div class="td" style="left:636px;top:55px;width:79px">血清</div><div class="td" style="left:716px;top:55px;width:79px">test</div><div class="tg" style="left:817px;top:65px;width:58px;color:#008000">已收费</div><div class="td" style="left:896px;top:55px;width:79px">男</div><div class="td" style="left:976px;top:55px;width:79px">54</div><div class="td" style="left:1536px;top:55px;width:160px;text-align:left;padding-left:24px">2</div><div class="hl" style="top:152px"></div><svg class="abs" style="left:20px;top:122px" width="8" height="12" viewBox="0 0 8 12"><path d="M2.500 2 L6.300 6 L2.500 10" stroke="#707378" stroke-width="1.100" fill="none"/></svg><div class="cb" style="top:121px"></div><div class="tg" style="left:113px;top:114px;width:46px;color:#f00">反审</div><div class="td" style="left:176px;top:104px;width:119px">891</div><div class="td" style="left:296px;top:104px;width:149px">20211220SHZ0004</div><div class="td l" style="left:556px;top:104px;width:79px">生化5:…</div><div class="td" style="left:636px;top:104px;width:79px">血清</div><div class="td" style="left:716px;top:104px;width:79px">test3</div><div class="tg" style="left:817px;top:114px;width:58px;color:#008000">已收费</div><div class="td" style="left:896px;top:104px;width:79px">男</div><div class="td" style="left:976px;top:104px;width:79px">58</div><div class="td" style="left:1536px;top:104px;width:160px;text-align:left;padding-left:24px">2</div><div class="hl" style="top:201px"></div><svg class="abs" style="left:20px;top:171px" width="8" height="12" viewBox="0 0 8 12"><path d="M2.500 2 L6.300 6 L2.500 10" stroke="#707378" stroke-width="1.100" fill="none"/></svg><div class="cb" style="top:170px"></div><div class="tg" style="left:113px;top:163px;width:46px;color:#f00">反审</div><div class="td" style="left:176px;top:153px;width:119px">890</div><div class="td" style="left:296px;top:153px;width:149px">20211220SHZ0003</div><div class="td l" style="left:556px;top:153px;width:79px">门诊生…</div><div class="td" style="left:636px;top:153px;width:79px">血清</div><div class="td" style="left:716px;top:153px;width:79px">test2</div><div class="tg" style="left:817px;top:163px;width:58px;color:#008000">已收费</div><div class="td" style="left:896px;top:153px;width:79px">男</div><div class="td" style="left:976px;top:153px;width:79px">89</div><div class="td" style="left:1536px;top:153px;width:160px;text-align:left;padding-left:24px">2</div><div class="hl" style="top:250px"></div><svg class="abs" style="left:20px;top:220px" width="8" height="12" viewBox="0 0 8 12"><path d="M2.500 2 L6.300 6 L2.500 10" stroke="#707378" stroke-width="1.100" fill="none"/></svg><div class="cb" style="top:219px"></div><div class="tg" style="left:113px;top:212px;width:46px;color:#f00">反审</div><div class="td" style="left:176px;top:202px;width:119px">889</div><div class="td" style="left:296px;top:202px;width:149px">20211220SHZ0002</div><div class="td l" style="left:556px;top:202px;width:79px">体检肝…</div><div class="td" style="left:636px;top:202px;width:79px">血清</div><div class="td" style="left:716px;top:202px;width:79px">test1</div><div class="tg" style="left:817px;top:212px;width:58px;color:#008000">已收费</div><div class="td" style="left:896px;top:202px;width:79px">男</div><div class="td" style="left:976px;top:202px;width:79px">45</div><div class="td" style="left:1536px;top:202px;width:160px;text-align:left;padding-left:24px">2</div><div class="hl" style="top:299px"></div><svg class="abs" style="left:20px;top:269px" width="8" height="12" viewBox="0 0 8 12"><path d="M2.500 2 L6.300 6 L2.500 10" stroke="#707378" stroke-width="1.100" fill="none"/></svg><div class="cb" style="top:268px"></div><div class="tg" style="left:113px;top:261px;width:46px;color:#f00">反审</div><div class="td" style="left:176px;top:251px;width:119px">888</div><div class="td" style="left:296px;top:251px;width:149px">20211220SHZ0001</div><div class="td l" style="left:556px;top:251px;width:79px">生化3…</div><div class="td" style="left:636px;top:251px;width:79px">血清</div><div class="td" style="left:716px;top:251px;width:79px">test</div><div class="tg" style="left:817px;top:261px;width:58px;color:#008000">已收费</div><div class="td" style="left:896px;top:251px;width:79px">男</div><div class="td" style="left:976px;top:251px;width:79px">12</div><div class="td" style="left:1056px;top:251px;width:79px">门诊</div><div class="td" style="left:1536px;top:251px;width:160px;text-align:left;padding-left:24px">2</div><div class="hl" style="top:348px"></div><svg class="abs" style="left:20px;top:318px" width="8" height="12" viewBox="0 0 8 12"><path d="M2.500 2 L6.300 6 L2.500 10" stroke="#707378" stroke-width="1.100" fill="none"/></svg><div class="cb" style="top:317px"></div><div class="tg" style="left:113px;top:310px;width:46px;color:#00f">未采</div><div class="td" style="left:176px;top:300px;width:119px">HQ0011012698</div><div class="td" style="left:446px;top:300px;width:109px">0012100570</div><div class="td l" style="left:556px;top:300px;width:79px">肿瘤遗…</div><div class="td" style="left:636px;top:300px;width:79px">血液</div><div class="td" style="left:716px;top:300px;width:79px">陈若飞</div><div class="tg" style="left:817px;top:310px;width:58px;color:#f00">未收费</div><div class="td" style="left:896px;top:300px;width:79px">男</div><div class="td" style="left:976px;top:300px;width:79px">50岁</div><div class="td" style="left:1056px;top:300px;width:79px">住院</div><div class="td l" style="left:1136px;top:300px;width:79px">18100…</div><div class="td l" style="left:1216px;top:300px;width:79px">左侧咽…</div><div class="td" style="left:1296px;top:300px;width:79px">刘继彦</div><div class="td l" style="left:1376px;top:300px;width:79px">生物治…</div><div class="td l" style="left:1456px;top:300px;width:79px">四川大…</div><div class="td" style="left:1536px;top:300px;width:160px;text-align:left;padding-left:24px">2</div><div class="hl" style="top:397px"></div><svg class="abs" style="left:20px;top:367px" width="8" height="12" viewBox="0 0 8 12"><path d="M2.500 2 L6.300 6 L2.500 10" stroke="#707378" stroke-width="1.100" fill="none"/></svg><div class="cb" style="top:366px"></div><div class="tg" style="left:113px;top:359px;width:46px;color:#00f">未采</div><div class="td" style="left:176px;top:349px;width:119px">HQ0011012697</div><div class="td" style="left:446px;top:349px;width:109px">0012100570</div><div class="td l" style="left:556px;top:349px;width:79px">肿瘤遗…</div><div class="td" style="left:636px;top:349px;width:79px">血液</div><div class="td" style="left:716px;top:349px;width:79px">陈若飞</div><div class="tg" style="left:817px;top:359px;width:58px;color:#f00">未收费</div><div class="td" style="left:896px;top:349px;width:79px">男</div><div class="td" style="left:976px;top:349px;width:79px">50岁</div><div class="td" style="left:1056px;top:349px;width:79px">住院</div><div class="td l" style="left:1136px;top:349px;width:79px">18100…</div><div class="td l" style="left:1216px;top:349px;width:79px">左侧咽…</div><div class="td" style="left:1296px;top:349px;width:79px">刘继彦</div><div class="td l" style="left:1376px;top:349px;width:79px">生物治…</div><div class="td l" style="left:1456px;top:349px;width:79px">四川大…</div><div class="td" style="left:1536px;top:349px;width:160px;text-align:left;padding-left:24px">2</div><div class="hl" style="top:446px"></div><svg class="abs" style="left:20px;top:416px" width="8" height="12" viewBox="0 0 8 12"><path d="M2.500 2 L6.300 6 L2.500 10" stroke="#707378" stroke-width="1.100" fill="none"/></svg><div class="cb" style="top:415px"></div><div class="tg" style="left:113px;top:408px;width:46px;color:#00f">未采</div><div class="td" style="left:176px;top:398px;width:119px">HQ0011012696</div><div class="td" style="left:446px;top:398px;width:109px">0012100570</div><div class="td l" style="left:556px;top:398px;width:79px">肿瘤遗…</div><div class="td" style="left:636px;top:398px;width:79px">血液</div><div class="td" style="left:716px;top:398px;width:79px">陈若飞</div><div class="tg" style="left:817px;top:408px;width:58px;color:#008000">已收费</div><div class="td" style="left:896px;top:398px;width:79px">男</div><div class="td" style="left:976px;top:398px;width:79px">50岁</div><div class="td" style="left:1056px;top:398px;width:79px">住院</div><div class="td l" style="left:1136px;top:398px;width:79px">18100…</div><div class="td l" style="left:1216px;top:398px;width:79px">左侧咽…</div><div class="td" style="left:1296px;top:398px;width:79px">刘继彦</div><div class="td l" style="left:1376px;top:398px;width:79px">生物治…</div><div class="td l" style="left:1456px;top:398px;width:79px">四川大…</div><div class="td" style="left:1536px;top:398px;width:160px;text-align:left;padding-left:24px">2</div><div class="hl" style="top:495px"></div><svg class="abs" style="left:20px;top:465px" width="8" height="12" viewBox="0 0 8 12"><path d="M2.500 2 L6.300 6 L2.500 10" stroke="#707378" stroke-width="1.100" fill="none"/></svg><div class="cb" style="top:464px"></div><div class="tg" style="left:113px;top:457px;width:46px;color:#00f">未采</div><div class="td" style="left:176px;top:447px;width:119px">HQ0011012695</div><div class="td" style="left:446px;top:447px;width:109px">0009714299</div><div class="td l" style="left:556px;top:447px;width:79px">实体瘤…</div><div class="td l" style="left:636px;top:447px;width:79px">组织/…</div><div class="td" style="left:716px;top:447px;width:79px">夏学茹</div><div class="tg" style="left:817px;top:457px;width:58px;color:#008000">已收费</div><div class="td" style="left:896px;top:447px;width:79px">女</div><div class="td" style="left:976px;top:447px;width:79px">72岁</div><div class="td" style="left:1056px;top:447px;width:79px">住院</div><div class="td l" style="left:1136px;top:447px;width:79px">13308…</div><div class="td l" style="left:1216px;top:447px;width:79px">右肺上…</div><div class="td" style="left:1296px;top:447px;width:79px">邱小明</div><div class="td l" style="left:1376px;top:447px;width:79px">温江肺…</div><div class="td l" style="left:1456px;top:447px;width:79px">四川大…</div><div class="td" style="left:1536px;top:447px;width:160px;text-align:left;padding-left:24px">2</div><div class="hl" style="top:544px"></div><svg class="abs" style="left:20px;top:514px" width="8" height="12" viewBox="0 0 8 12"><path d="M2.500 2 L6.300 6 L2.500 10" stroke="#707378" stroke-width="1.100" fill="none"/></svg><div class="cb" style="top:513px"></div><div class="tg" style="left:113px;top:506px;width:46px;color:#00f">未采</div><div class="td" style="left:176px;top:496px;width:119px">HQ0011012694</div><div class="td" style="left:446px;top:496px;width:109px">0009714299</div><div class="td l" style="left:556px;top:496px;width:79px">实体瘤…</div><div class="td l" style="left:636px;top:496px;width:79px">组织/…</div><div class="td" style="left:716px;top:496px;width:79px">夏学茹</div><div class="tg" style="left:817px;top:506px;width:58px;color:#008000">已收费</div><div class="td" style="left:896px;top:496px;width:79px">女</div><div class="td" style="left:976px;top:496px;width:79px">72岁</div><div class="td" style="left:1056px;top:496px;width:79px">住院</div><div class="td l" style="left:1136px;top:496px;width:79px">13308…</div><div class="td" style="left:1296px;top:496px;width:79px">邱小明</div><div class="td l" style="left:1376px;top:496px;width:79px">温江肺…</div><div class="td l" style="left:1456px;top:496px;width:79px">四川大…</div><div class="td" style="left:1536px;top:496px;width:160px;text-align:left;padding-left:24px">2</div><div class="hl" style="top:593px"></div><svg class="abs" style="left:20px;top:563px" width="8" height="12" viewBox="0 0 8 12"><path d="M2.500 2 L6.300 6 L2.500 10" stroke="#707378" stroke-width="1.100" fill="none"/></svg><div class="cb" style="top:562px"></div><div class="tg" style="left:113px;top:555px;width:46px;color:#00f">未采</div><div class="td" style="left:176px;top:545px;width:119px">HQ0011012693</div><div class="td" style="left:446px;top:545px;width:109px">0009714299</div><div class="td l" style="left:556px;top:545px;width:79px">实体瘤…</div><div class="td l" style="left:636px;top:545px;width:79px">组织/…</div><div class="td" style="left:716px;top:545px;width:79px">夏学茹</div><div class="tg" style="left:817px;top:555px;width:58px;color:#008000">已收费</div><div class="td" style="left:896px;top:545px;width:79px">女</div><div class="td" style="left:976px;top:545px;width:79px">72岁</div><div class="td" style="left:1056px;top:545px;width:79px">住院</div><div class="td l" style="left:1136px;top:545px;width:79px">13308…</div><div class="td" style="left:1296px;top:545px;width:79px">邱小明</div><div class="td l" style="left:1376px;top:545px;width:79px">温江肺…</div><div class="td l" style="left:1456px;top:545px;width:79px">四川大…</div><div class="td" style="left:1536px;top:545px;width:160px;text-align:left;padding-left:24px">2</div><div class="hl" style="top:642px"></div><svg class="abs" style="left:20px;top:612px" width="8" height="12" viewBox="0 0 8 12"><path d="M2.500 2 L6.300 6 L2.500 10" stroke="#707378" stroke-width="1.100" fill="none"/></svg><div class="cb" style="top:611px"></div><div class="tg" style="left:113px;top:604px;width:46px;color:#00f">未采</div><div class="td" style="left:176px;top:594px;width:119px">HQ0011012692</div><div class="td" style="left:446px;top:594px;width:109px">0009714299</div><div class="td l" style="left:556px;top:594px;width:79px">实体瘤…</div><div class="td l" style="left:636px;top:594px;width:79px">组织/…</div><div class="td" style="left:716px;top:594px;width:79px">夏学茹</div><div class="tg" style="left:817px;top:604px;width:58px;color:#008000">已收费</div><div class="td" style="left:896px;top:594px;width:79px">女</div><div class="td" style="left:976px;top:594px;width:79px">72岁</div><div class="td" style="left:1056px;top:594px;width:79px">住院</div><div class="td l" style="left:1136px;top:594px;width:79px">13308…</div><div class="td" style="left:1296px;top:594px;width:79px">邱小明</div><div class="td l" style="left:1376px;top:594px;width:79px">温江肺…</div><div class="td l" style="left:1456px;top:594px;width:79px">四川大…</div><div class="td" style="left:1536px;top:594px;width:160px;text-align:left;padding-left:24px">2</div><div class="hl" style="top:691px"></div><svg class="abs" style="left:20px;top:661px" width="8" height="12" viewBox="0 0 8 12"><path d="M2.500 2 L6.300 6 L2.500 10" stroke="#707378" stroke-width="1.100" fill="none"/></svg><div class="cb" style="top:660px"></div><div class="tg" style="left:113px;top:653px;width:46px;color:#00f">未采</div><div class="td" style="left:176px;top:643px;width:119px">HQ0011012691</div><div class="td" style="left:446px;top:643px;width:109px">0009714299</div><div class="td l" style="left:556px;top:643px;width:79px">实体瘤…</div><div class="td l" style="left:636px;top:643px;width:79px">组织/…</div><div class="td" style="left:716px;top:643px;width:79px">夏学茹</div><div class="tg" style="left:817px;top:653px;width:58px;color:#f00">未收费</div><div class="td" style="left:896px;top:643px;width:79px">女</div><div class="td" style="left:976px;top:643px;width:79px">72岁</div><div class="td" style="left:1056px;top:643px;width:79px">住院</div><div class="td l" style="left:1136px;top:643px;width:79px">13308…</div><div class="td" style="left:1296px;top:643px;width:79px">邱小明</div><div class="td l" style="left:1376px;top:643px;width:79px">温江肺…</div><div class="td l" style="left:1456px;top:643px;width:79px">四川大…</div><div class="td" style="left:1536px;top:643px;width:160px;text-align:left;padding-left:24px">2</div><div id="fix"><div class="hd2">操作</div><div class="lk" style="top:55px">追溯</div><div class="hl2" style="top:103px"></div><div class="lk" style="top:104px">追溯</div><div class="hl2" style="top:152px"></div><div class="lk" style="top:153px">追溯</div><div class="hl2" style="top:201px"></div><div class="lk" style="top:202px">追溯</div><div class="hl2" style="top:250px"></div><div class="lk" style="top:251px">追溯</div><div class="hl2" style="top:299px"></div><div class="lk" style="top:300px">追溯</div><div class="hl2" style="top:348px"></div><div class="lk" style="top:349px">追溯</div><div class="hl2" style="top:397px"></div><div class="lk" style="top:398px">追溯</div><div class="hl2" style="top:446px"></div><div class="lk" style="top:447px">追溯</div><div class="hl2" style="top:495px"></div><div class="lk" style="top:496px">追溯</div><div class="hl2" style="top:544px"></div><div class="lk" style="top:545px">追溯</div><div class="hl2" style="top:593px"></div><div class="lk" style="top:594px">追溯</div><div class="hl2" style="top:642px"></div><div class="lk" style="top:643px">追溯</div><div class="hl2" style="top:691px"></div></div></div>
<div class="abs" style="left:2px;top:96px;width:252px;height:51.5px;border:3px solid #f92d2d"></div><div class="abs" style="left:225px;top:190px;width:67px;height:35px;border:3px solid #f92d2d"></div><div class="abs" style="left:1326px;top:182px;width:66px;height:47px;border:3px solid #f92d2d"></div><svg class="abs" style="left:0;top:0;overflow:visible" width="1697" height="400"><polygon points="255.0,134.6 269.2,127.3 269.3,131.0 596.0,158.6 596.0,159.4 269.3,139.0 269.5,142.7" fill="#f92d2d"/></svg><div class="abs" style="left:287.500px;top:142.800px;font-size:28px;line-height:40px;color:#fa2b2b;white-space:nowrap;font-weight:400;letter-spacing:.22px;font-family:'Noto Sans CJK SC',sans-serif">可以搜索体检号，条码号，申请医生等，多个字段</div>
</div><div class="abs" style="left:1895px;top:0;width:25px;height:866px;background:#f1f1f1"></div><div class="abs" style="left:1897px;top:26px;width:21px;height:663px;background:#c1c1c1"></div><svg class="ico" style="left:1902px;top:11px" width="11.500" height="6.500" viewBox="0 0 13 7"><path d="M6.500 0 L13 7 H0 Z" fill="#a8a8a8"/></svg>
<div class="abs" style="left:1843px;top:739px;width:77px;height:127px;background:#fff;box-shadow:0 0 8px rgba(0,0,0,.35);overflow:hidden"><div class="abs" style="left:0;top:0;width:19px;height:127px;background:linear-gradient(90deg,#fafafa 0%,#ececec 55%,#bdbdbd 100%)"></div><div class="abs" style="left:19px;top:0;width:58px;height:4px;background:#efefef"></div><div class="lab" style="left:35px;top:21px">查询</div><div class="lab" style="left:35px;top:58px">开始</div><div class="abs" style="left:75px;top:21px;width:10px;height:28px;border:1px solid #dcdfe6;border-radius:4px"></div><div class="abs" style="left:75px;top:58px;width:10px;height:28px;border:1px solid #dcdfe6;border-radius:4px"></div><div class="abs" style="left:35px;top:91px;width:50px;height:40px;background:#f8f8f9;border:1px solid #dfe6ec"></div></div><div class="abs" style="left:0;top:864.500px;width:1843px;height:2px;background:#111"></div>
</div>
</body>
</html>
